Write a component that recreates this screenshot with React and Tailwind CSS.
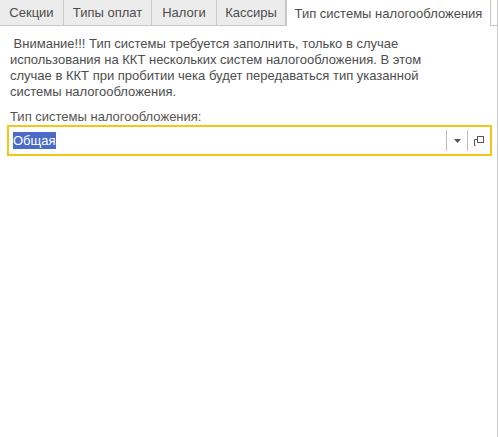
import React from "react";

const tabs = [
  { label: "Секции", w: "w-[64px]" },
  { label: "Типы оплат", w: "w-[88px]" },
  { label: "Налоги", w: "w-[65px]" },
  { label: "Кассиры", w: "w-[69px]" },
];

const App = () => {
  return (
    <div
      className="w-[498px] h-[437px] bg-white text-[13px] text-[#4d4d4d] flex flex-col"
      style={{ fontFamily: '"Liberation Sans", Arial, sans-serif' }}
    >
      {/* tab strip */}
      <div className="flex h-[26px] shrink-0">
        {tabs.map((t) => (
          <div
            key={t.label}
            className={`${t.w} h-[26px] bg-[#ececec] border-r border-b border-[#c8c8c8] flex items-center justify-center leading-none`}
          >
            {t.label}
          </div>
        ))}
        <div className="w-[205px] h-[26px] bg-white border-x border-[#c8c8c8] flex items-center justify-center leading-none">
          Тип системы налогообложения
        </div>
        <div className="flex-1 h-[26px] border-b border-r border-[#c8c8c8]" />
      </div>

      {/* panel */}
      <div className="flex-1 border-r border-[#c8c8c8] px-[7px] pt-[10px]">
        <p className="pl-[3px] leading-[16px] whitespace-nowrap">
          &nbsp;Внимание!!! Тип системы требуется заполнить, только в случае
          <br />
          использования на ККТ нескольких систем налогообложения. В этом
          <br />
          случае в ККТ при пробитии чека будет передаваться тип указанной
          <br />
          системы налогообложения.
        </p>
        <div className="mt-[9px] pl-[3px] leading-[16px] text-[#555]">
          Тип системы налогообложения:
        </div>
        <div className="w-[485px] h-[31px] border-2 border-[#f6c51b] flex items-center">
          <div className="flex-1 pl-[4px]">
            <span className="bg-[#4a6bc8] text-white leading-[17px] inline-block">
              Общая
            </span>
          </div>
          <div className="w-px h-[21px] bg-[#bdbdbd]" />
          <div className="w-[20px] h-full flex items-center justify-center">
            <svg width="7" height="4" viewBox="0 0 7 4">
              <path d="M0 0h7L3.5 4z" fill="#555" />
            </svg>
          </div>
          <div className="w-px h-[21px] bg-[#bdbdbd]" />
          <div className="w-[22px] h-full flex items-center justify-center">
            <svg width="10" height="10" viewBox="0 0 10 10" fill="none" stroke="#555" strokeWidth="1">
              <rect x="3.5" y="0.5" width="6" height="6" />
              <path d="M3.5 3.5H0.5V9.5H1.5" />
              <path d="M0.5 9.5V6.5" />
            </svg>
          </div>
        </div>
      </div>
    </div>
  );
};

export default App;
